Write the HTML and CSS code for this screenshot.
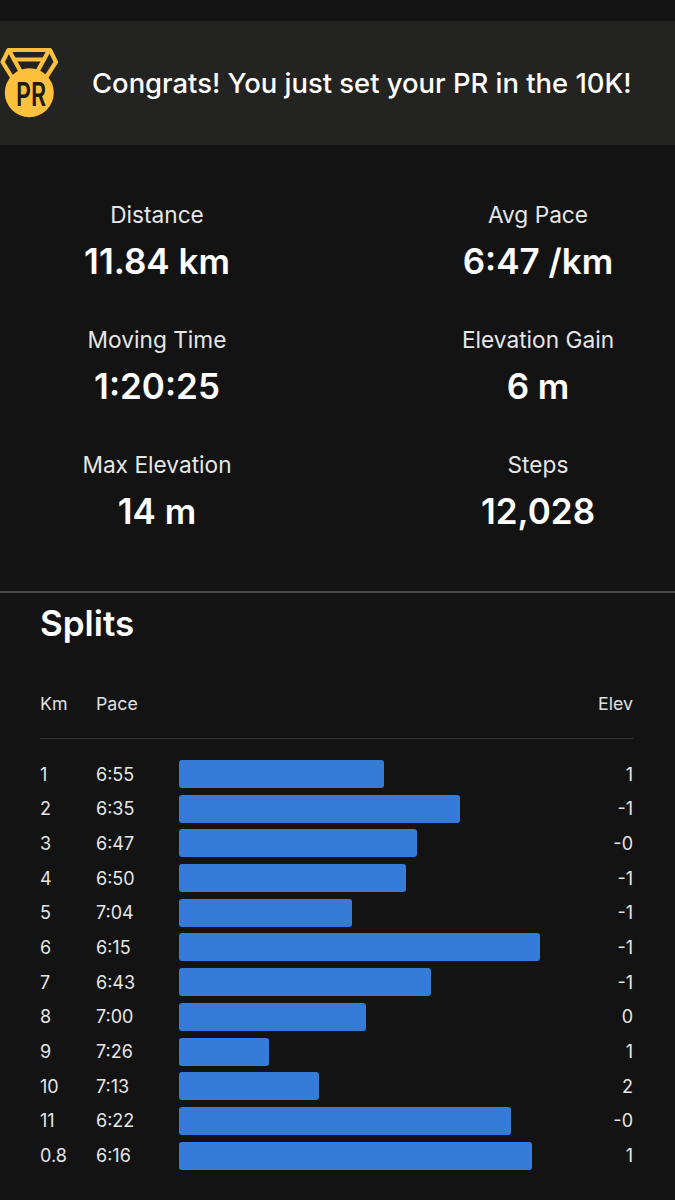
FILE: index.html
```html
<!DOCTYPE html>
<html lang="en">
<head>
    <meta charset="UTF-8">
    <meta name="viewport" content="width=device-width, initial-scale=1.0">
    <title>Activity</title>
    <link rel="stylesheet" href="styles.css">
</head>
<body>
    <div class="banner">
        <svg class="medal" viewBox="0 40 64 84" width="64" height="84">
            <g fill="none" stroke="#fcc03c" stroke-width="4.200" stroke-linejoin="round" stroke-linecap="round">
                <path d="M13 79L2.500 62L8.500 50H50L56 62L45 79"/>
                <path d="M10 52L22 74"/>
                <path d="M48 52L36 74"/>
                <path d="M14 59.500H44"/>
            </g>
            <circle cx="29.300" cy="92.700" r="24.500" fill="#fcc03c"/>
            <text class="medal-text" x="16" y="105.500" textLength="30" lengthAdjust="spacingAndGlyphs">PR</text>
        </svg>
        <p class="banner-text">Congrats! You just set your PR in the 10K!</p>
    </div>

    <div class="stats">
        <div class="stat"><span class="stat-label">Distance</span><span class="stat-value">11.84 km</span></div>
        <div class="stat"><span class="stat-label">Avg Pace</span><span class="stat-value">6:47 /km</span></div>
        <div class="stat"><span class="stat-label">Moving Time</span><span class="stat-value">1:20:25</span></div>
        <div class="stat"><span class="stat-label">Elevation Gain</span><span class="stat-value">6 m</span></div>
        <div class="stat"><span class="stat-label">Max Elevation</span><span class="stat-value">14 m</span></div>
        <div class="stat"><span class="stat-label">Steps</span><span class="stat-value">12,028</span></div>
    </div>

    <div class="splits">
        <h2>Splits</h2>
        <div class="splits-head">
            <span>Km</span>
            <span>Pace</span>
            <span class="elev">Elev</span>
        </div>
        <div class="split-rows">
            <div class="split"><span>1</span><span>6:55</span><div class="bar" style="width: 205px"></div><span class="elev">1</span></div>
            <div class="split"><span>2</span><span>6:35</span><div class="bar" style="width: 281px"></div><span class="elev">-1</span></div>
            <div class="split"><span>3</span><span>6:47</span><div class="bar" style="width: 238px"></div><span class="elev">-0</span></div>
            <div class="split"><span>4</span><span>6:50</span><div class="bar" style="width: 227px"></div><span class="elev">-1</span></div>
            <div class="split"><span>5</span><span>7:04</span><div class="bar" style="width: 173px"></div><span class="elev">-1</span></div>
            <div class="split"><span>6</span><span>6:15</span><div class="bar" style="width: 361px"></div><span class="elev">-1</span></div>
            <div class="split"><span>7</span><span>6:43</span><div class="bar" style="width: 252px"></div><span class="elev">-1</span></div>
            <div class="split"><span>8</span><span>7:00</span><div class="bar" style="width: 187px"></div><span class="elev">0</span></div>
            <div class="split"><span>9</span><span>7:26</span><div class="bar" style="width: 90px"></div><span class="elev">1</span></div>
            <div class="split"><span>10</span><span>7:13</span><div class="bar" style="width: 140px"></div><span class="elev">2</span></div>
            <div class="split"><span>11</span><span>6:22</span><div class="bar" style="width: 332px"></div><span class="elev">-0</span></div>
            <div class="split"><span>0.8</span><span>6:16</span><div class="bar" style="width: 353px"></div><span class="elev">1</span></div>
        </div>
    </div>
</body>
</html>
```
FILE: styles.css
```css
html, body {
    margin: 0;
    padding: 0;
}

body {
    width: 675px;
    height: 1200px;
    overflow: hidden;
    background-color: #131313;
    color: #fff;
    font-family: Inter, "Liberation Sans", sans-serif;
}

.banner {
    display: flex;
    align-items: center;
    gap: 28px;
    height: 124px;
    margin-top: 21px;
    background-color: #232322;
}

.medal {
    flex: none;
    margin-top: -2px;
}

.medal-text {
    font-family: Inter, sans-serif;
    font-size: 32px;
    font-weight: 600;
    fill: #1c1a14;
}

.banner-text {
    margin: 0;
    font-size: 27.400px;
    font-weight: 500;
    white-space: nowrap;
}

.stats {
    display: grid;
    grid-template-columns: 314px 270px;
    column-gap: 89px;
    grid-auto-rows: 125px;
    height: 448px;
    padding-top: 55px;
    box-sizing: border-box;
    border-bottom: 2px solid #474847;
}

.stat {
    display: flex;
    flex-direction: column;
    align-items: center;
    gap: 9px;
}

.stat-label {
    font-size: 22.700px;
    line-height: 30px;
    color: #e6e6e6;
}

.stat-value {
    font-size: 35px;
    line-height: 44px;
    font-weight: 600;
}

.splits {
    padding: 0 42px 0 40px;
}

.splits h2 {
    margin: 8px 0 0;
    font-size: 35px;
    line-height: 44px;
    font-weight: 600;
}

.splits-head {
    display: grid;
    grid-template-columns: 56px 1fr auto;
    align-items: center;
    height: 44px;
    margin-top: 36px;
    font-size: 17.800px;
    color: #e0e0e0;
    border-bottom: 1px solid #343434;
    padding-bottom: 13px;
}

.split-rows {
    display: flex;
    flex-direction: column;
    gap: 6.700px;
    margin-top: 21px;
}

.split {
    display: grid;
    grid-template-columns: 56px 83px 1fr auto;
    align-items: center;
    height: 28px;
    font-size: 18px;
    color: #e6e6e6;
}

.elev {
    text-align: right;
}

.bar {
    height: 28px;
    border-radius: 3px;
    background-color: #347cd8;
}
```
